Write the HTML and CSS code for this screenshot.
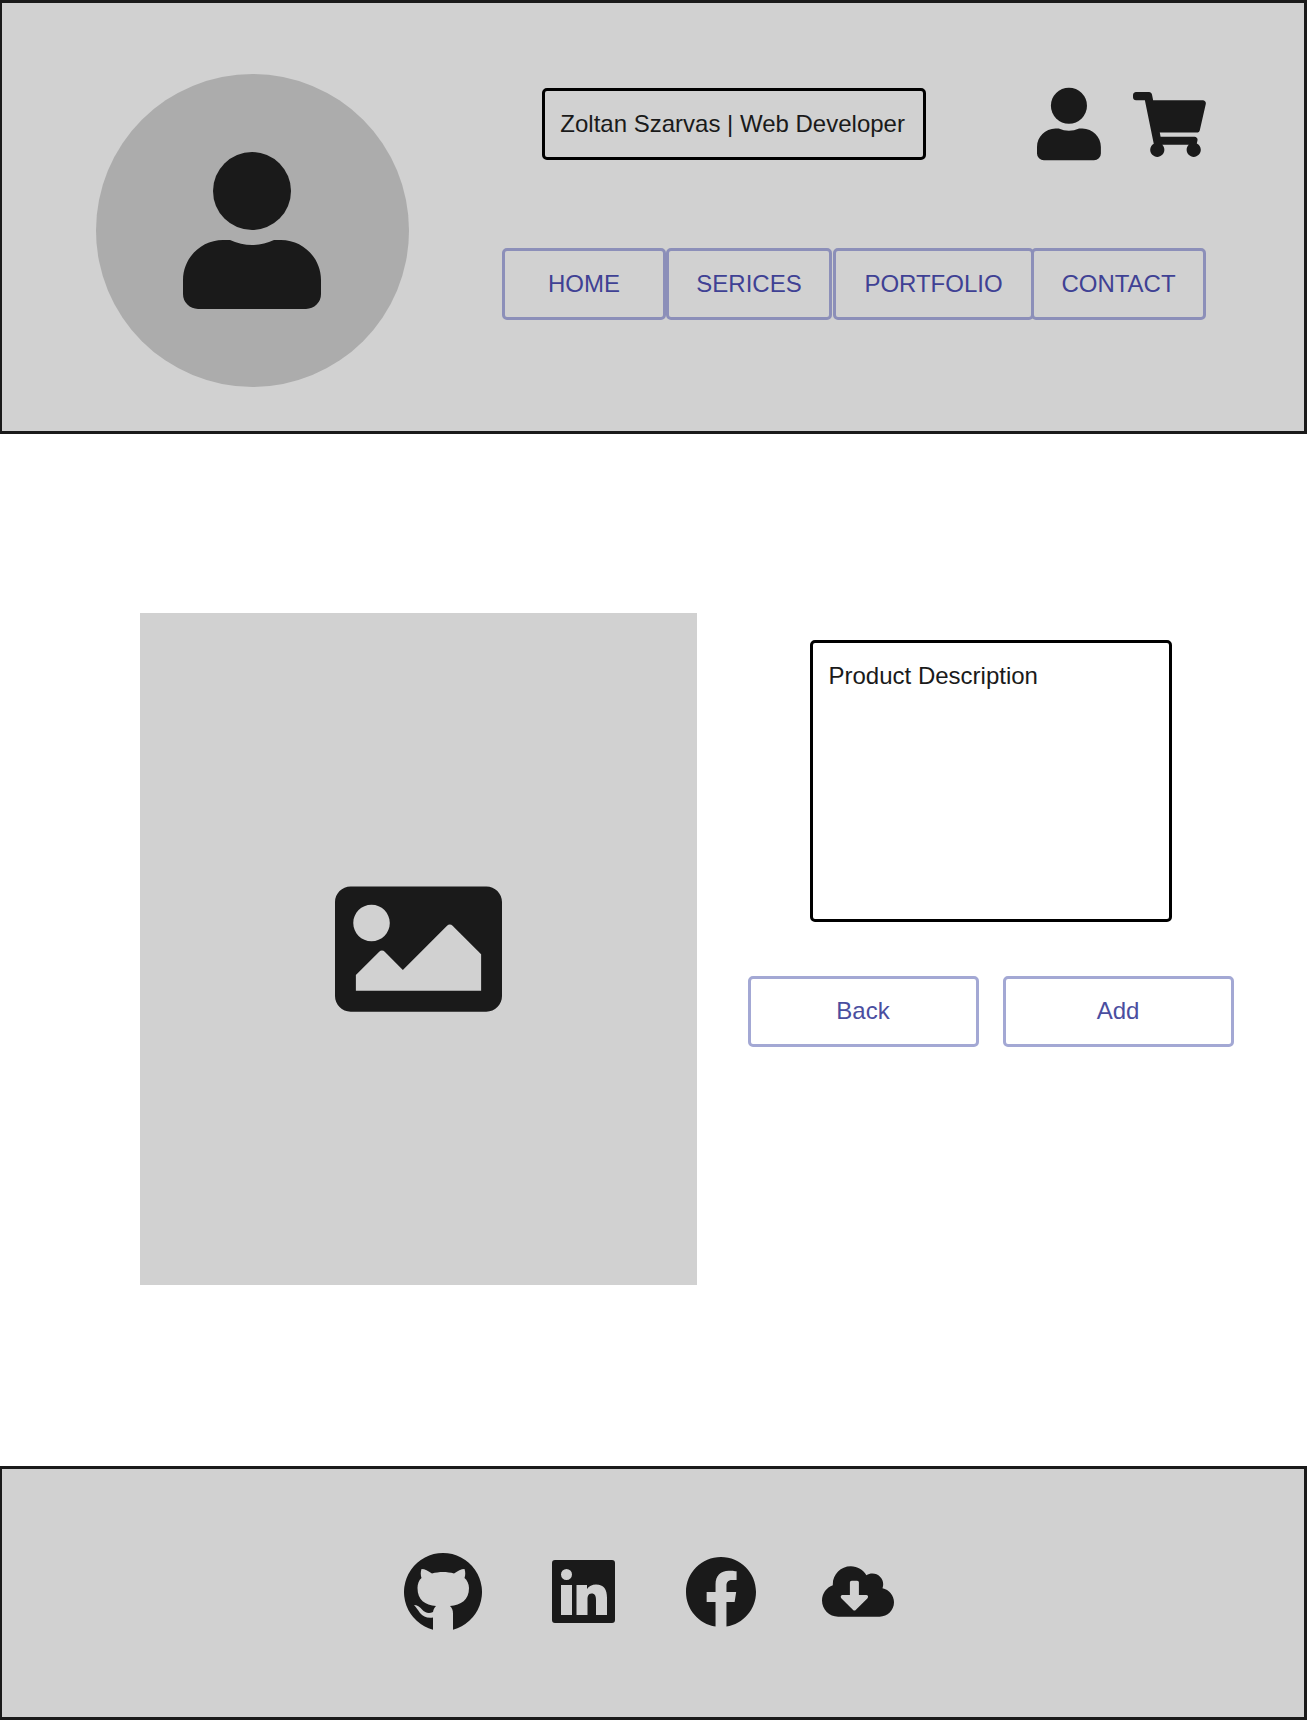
FILE: index.html
```html
<!DOCTYPE html>
<html lang="en">
<head>
    <meta charset="UTF-8">
    <meta name="viewport" content="width=device-width, initial-scale=1.0">
    <title>Product Details</title>
    <link rel="stylesheet" href="styles.css">
</head>
<body>
    <header class="site-header">
        <div class="avatar">
            <svg class="avatar-icon" viewBox="0 0 138 157"><use href="#person"></use></svg>
        </div>
        <div class="header-right">
            <div class="top-row">
                <div class="title-box">Zoltan Szarvas | Web Developer</div>
                <svg class="user-icon" viewBox="0 0 138 157">
                    <g id="person">
                        <circle cx="69" cy="39" r="39"></circle>
                        <path d="M47 88Q69 98 91 88H98C120 88 138 106 138 128V142A15 15 0 0 1 123 157H15A15 15 0 0 1 0 142V128C0 106 18 88 40 88Z"></path>
                    </g>
                </svg>
                <svg class="cart-icon" viewBox="0 0 576 512"><path d="M528.12 301.319l47.273-208C578.806 78.301 567.391 64 551.99 64H159.208l-9.166-44.81C147.758 8.021 137.93 0 126.529 0H24C10.745 0 0 10.745 0 24v16c0 13.255 10.745 24 24 24h69.883l70.248 343.435C147.325 417.1 136 435.222 136 456c0 30.928 25.072 56 56 56s56-25.072 56-56c0-15.674-6.447-29.835-16.824-40h209.647C430.447 426.165 424 440.326 424 456c0 30.928 25.072 56 56 56s56-25.072 56-56c0-22.172-12.888-41.332-31.579-50.405l5.517-24.276c3.413-15.018-8.002-29.319-23.403-29.319H218.117l-6.545-32h293.145c11.206 0 20.92-7.754 23.403-18.681z"></path></svg>
            </div>
            <nav class="main-nav">
                <a class="nav-btn nav-home">HOME</a>
                <a class="nav-btn nav-services">SERICES</a>
                <a class="nav-btn nav-portfolio">PORTFOLIO</a>
                <a class="nav-btn nav-contact">CONTACT</a>
            </nav>
        </div>
    </header>

    <main class="product">
        <div class="product-image">
            <svg class="image-icon" viewBox="0 64 512 384"><path d="M464 448H48c-26.51 0-48-21.49-48-48V112c0-26.51 21.49-48 48-48h416c26.51 0 48 21.49 48 48v288c0 26.51-21.49 48-48 48zM112 120c-30.928 0-56 25.072-56 56s25.072 56 56 56 56-25.072 56-56-25.072-56-56-56zM64 384h384V272l-87.515-87.515c-4.686-4.686-12.284-4.686-16.971 0L208 320l-55.515-55.515c-4.686-4.686-12.284-4.686-16.971 0L64 336v48z"></path></svg>
        </div>
        <div class="product-info">
            <div class="description">Product Description</div>
            <div class="actions">
                <button type="button" class="action-btn">Back</button>
                <button type="button" class="action-btn">Add</button>
            </div>
        </div>
    </main>

    <footer class="site-footer">
        <svg class="github-icon" viewBox="0 0 78 78"><path d="M29 76.7A39 39 0 1 1 49 76.7V61C49 57 48 55 46 53C57 52 65 47 65 35C65 31 63 27 60.5 25C61.5 22 61.5 19 60.5 16C57 16 54 18 50 20.5C43 18.5 35 18.5 28 20.5C24 18 21 16 17.5 16C16.5 19 16.5 22 17.5 25C15 27 13.5 31 13.5 35C13.5 47 21 52 32 53C30.5 54.5 29.5 56 29 59C25 61 21 60 18 56.5C16 54 13 52 10 52C12 54 14 57 16 60C19 64 24 65.5 29 64.5Z"></path></svg>
        <svg class="linkedin-icon" viewBox="0 0 63 63"><path fill-rule="evenodd" d="M3 0H60A3 3 0 0 1 63 3V60A3 3 0 0 1 60 63H3A3 3 0 0 1 0 60V3A3 3 0 0 1 3 0ZM9 25V55H20V25ZM9 14.5A5.5 5.5 0 0 0 20 14.5A5.5 5.5 0 0 0 9 14.5ZM24.5 25V55H35.5V40C35.5 36.5 36 33.5 39.5 33.5C43 33.5 44 36 44 40V55H55V38C55 29.5 52 24.5 44 24.5C40 24.5 37 26 35 29V25Z"></path></svg>
        <svg class="facebook-icon" viewBox="8 8 496 496"><path d="M504 256C504 119 393 8 256 8S8 119 8 256c0 123.78 90.69 226.38 209.25 245V327.69h-63V256h63v-54.64c0-62.15 37-96.48 93.67-96.48 27.14 0 55.52 4.84 55.52 4.84v61h-31.28c-30.8 0-40.41 19.12-40.41 38.73V256h68.78l-11 71.69h-57.78V501C413.31 482.38 504 379.78 504 256z"></path></svg>
        <svg class="cloud-icon" viewBox="0 32 640 448"><path d="M537.6 226.6c4.1-10.7 6.4-22.4 6.4-34.6 0-53-43-96-96-96-19.7 0-38.1 6-53.3 16.2C367 64.2 315.3 32 256 32c-88.4 0-160 71.6-160 160 0 2.7.1 5.4.2 8.1C40.2 219.8 0 273.2 0 336c0 79.5 64.5 144 144 144h368c70.7 0 128-57.3 128-128 0-61.9-44-113.6-102.4-125.4zm-132.9 88.7L299.3 420.7c-6.2 6.2-16.4 6.2-22.6 0L171.3 315.3c-10.1-10.1-2.9-27.3 11.3-27.3H248V176c0-8.8 7.2-16 16-16h48c8.8 0 16 7.2 16 16v112h65.4c14.2 0 21.4 17.2 11.3 27.3z"></path></svg>
    </footer>
</body>
</html>
```

FILE: styles.css
```css
* {
    box-sizing: border-box;
}
body {
    margin: 0;
    font-family: "Liberation Sans", Arial, sans-serif;
    font-size: 24px;
    color: #1a1a1a;
    background: #ffffff;
}
svg {
    display: block;
    fill: #1a1a1a;
}

.site-header {
    display: flex;
    align-items: flex-start;
    height: 434px;
    background: #d1d1d1;
    border: 3px solid #1a1a1a;
    border-left-width: 2px;
}
.avatar {
    display: flex;
    align-items: center;
    justify-content: center;
    width: 313px;
    height: 313px;
    margin: 71px 0 0 94px;
    border-radius: 50%;
    background: #acacac;
}
.avatar-icon {
    width: 138px;
    height: 157px;
    margin-right: 1px;
}
.header-right {
    width: 704px;
    margin: 84px 0 0 93px;
}
.top-row {
    display: flex;
    align-items: center;
    padding-left: 40px;
}
.title-box {
    display: flex;
    align-items: center;
    justify-content: center;
    width: 385px;
    height: 72px;
    padding-right: 3px;
    border: 3px solid #000000;
    border-radius: 5px;
}
.user-icon {
    width: 64px;
    height: 74px;
    margin-left: 111px;
}
.cart-icon {
    width: 73px;
    height: 65px;
    margin-left: 32px;
}
.main-nav {
    display: flex;
    margin-top: 87px;
}
.nav-btn {
    display: flex;
    align-items: center;
    justify-content: center;
    height: 72px;
    border: 3px solid #8c8fb9;
    border-radius: 5px;
    color: #3f4194;
}
.nav-home {
    width: 164px;
}
.nav-services {
    width: 166px;
}
.nav-portfolio {
    width: 201px;
    margin-left: 1px;
}
.nav-contact {
    width: 175px;
    margin-left: -3px;
}

.product {
    display: flex;
    align-items: flex-start;
    height: 1032px;
    padding: 179px 0 0 140px;
}
.product-image {
    display: flex;
    align-items: center;
    justify-content: center;
    width: 557px;
    height: 672px;
    background: #d1d1d1;
}
.image-icon {
    width: 167px;
    height: 126px;
}
.product-info {
    display: flex;
    flex-direction: column;
    align-items: center;
    width: 487px;
    margin: 27px 0 0 50px;
}
.description {
    width: 362px;
    height: 282px;
    padding: 19px 16px;
    border: 3px solid #000000;
    border-radius: 5px;
    background: #ffffff;
}
.actions {
    display: flex;
    gap: 24px;
    margin-top: 54px;
}
.action-btn {
    width: 231px;
    height: 71px;
    padding: 0 0 2px;
    border: 3px solid #a3a8d4;
    border-radius: 5px;
    background: #ffffff;
    color: #4a4ea0;
    font: inherit;
}

.site-footer {
    display: flex;
    align-items: center;
    height: 254px;
    padding: 0 0 3px 402px;
    background: #d1d1d1;
    border: 3px solid #1a1a1a;
    border-left-width: 2px;
}
.github-icon {
    width: 78px;
    height: 78px;
}
.linkedin-icon {
    width: 63px;
    height: 63px;
    margin-left: 70px;
}
.facebook-icon {
    width: 70px;
    height: 70px;
    margin-left: 71px;
}
.cloud-icon {
    width: 72px;
    height: 51px;
    margin-left: 66px;
}
```
